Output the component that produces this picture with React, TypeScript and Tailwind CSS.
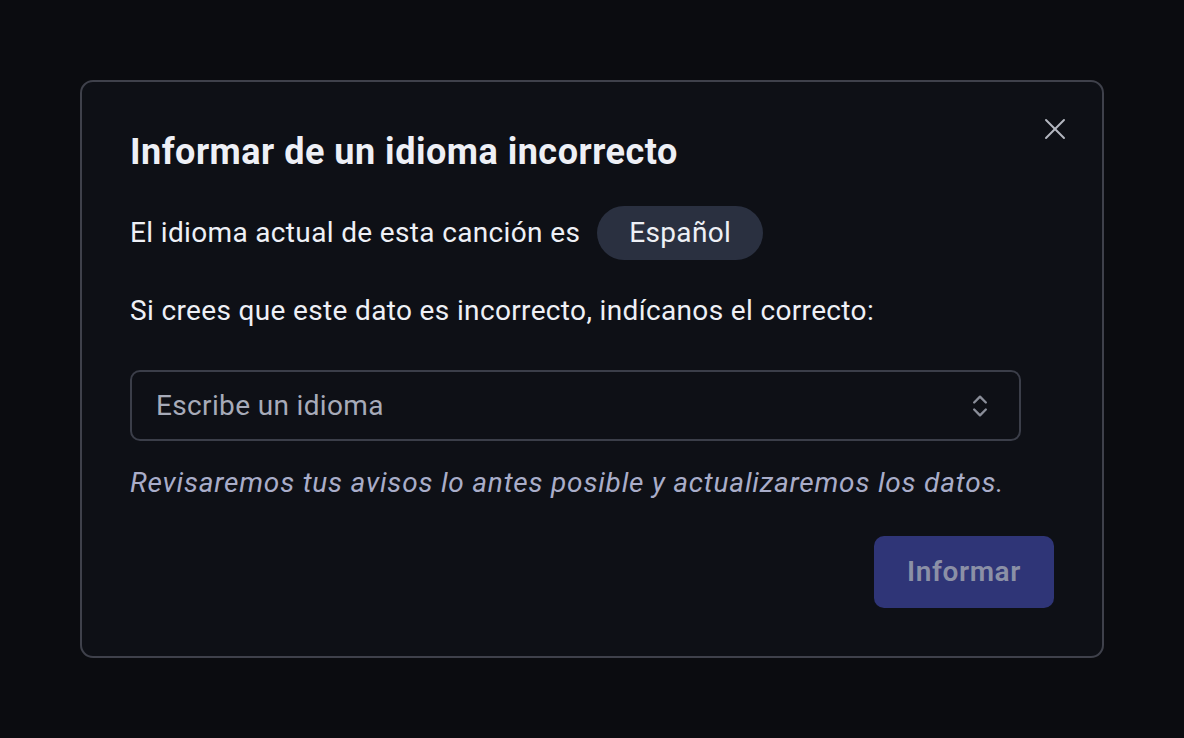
import { X, ChevronsUpDown } from "lucide-react";

export default function App() {
  return (
    <div
      className="min-h-screen w-full bg-[#0b0c10] flex items-start justify-center pt-[80px]"
      style={{ fontFamily: "Roboto, 'Noto Sans', sans-serif" }}
    >
      <div className="relative w-[1024px] h-[578px] rounded-[13px] border-2 border-[#3f414b] bg-[#0e1016] px-[48px] pt-[48px]">
        <button className="absolute right-[29px] top-[29px] text-[#b4b7c0]">
          <X className="h-[36px] w-[36px]" strokeWidth={1.3} />
        </button>

        <h2 className="text-[36px] leading-[44px] font-bold text-[#eef0f6] tracking-[0.5px]">
          Informar de un idioma incorrecto
        </h2>

        <div className="mt-[32px] flex items-center gap-[17px] text-[28px] text-[#eef0f6] tracking-[0.35px]">
          <span>El idioma actual de esta canción es</span>
          <span className="inline-flex h-[54px] items-center rounded-full bg-[#2a3040] px-[32px]">
            Español
          </span>
        </div>

        <p className="mt-[31px] text-[28px] leading-[40px] text-[#eef0f6] tracking-[0.35px]">
          Si crees que este dato es incorrecto, indícanos el correcto:
        </p>

        <div className="mt-[39px] flex h-[71px] w-[891px] items-center justify-between rounded-[10px] border-2 border-[#3b3e49] pl-[24px] pr-[25px]">
          <span className="text-[28px] tracking-[0.35px] text-[#a7abb9]">Escribe un idioma</span>
          <ChevronsUpDown className="h-[28px] w-[28px] text-[#8a8e99]" strokeWidth={2} />
        </div>

        <p className="mt-[22px] text-[28px] leading-[40px] italic text-[#a9adc9] tracking-[0.8px]">
          Revisaremos tus avisos lo antes posible y actualizaremos los datos.
        </p>

        <div className="mt-[33px] flex justify-end">
          <button className="h-[72px] w-[180px] rounded-[10px] bg-[#2f3577] text-[28px] font-semibold text-[#8b90a6] tracking-[0.6px]">
            Informar
          </button>
        </div>
      </div>
    </div>
  );
}
